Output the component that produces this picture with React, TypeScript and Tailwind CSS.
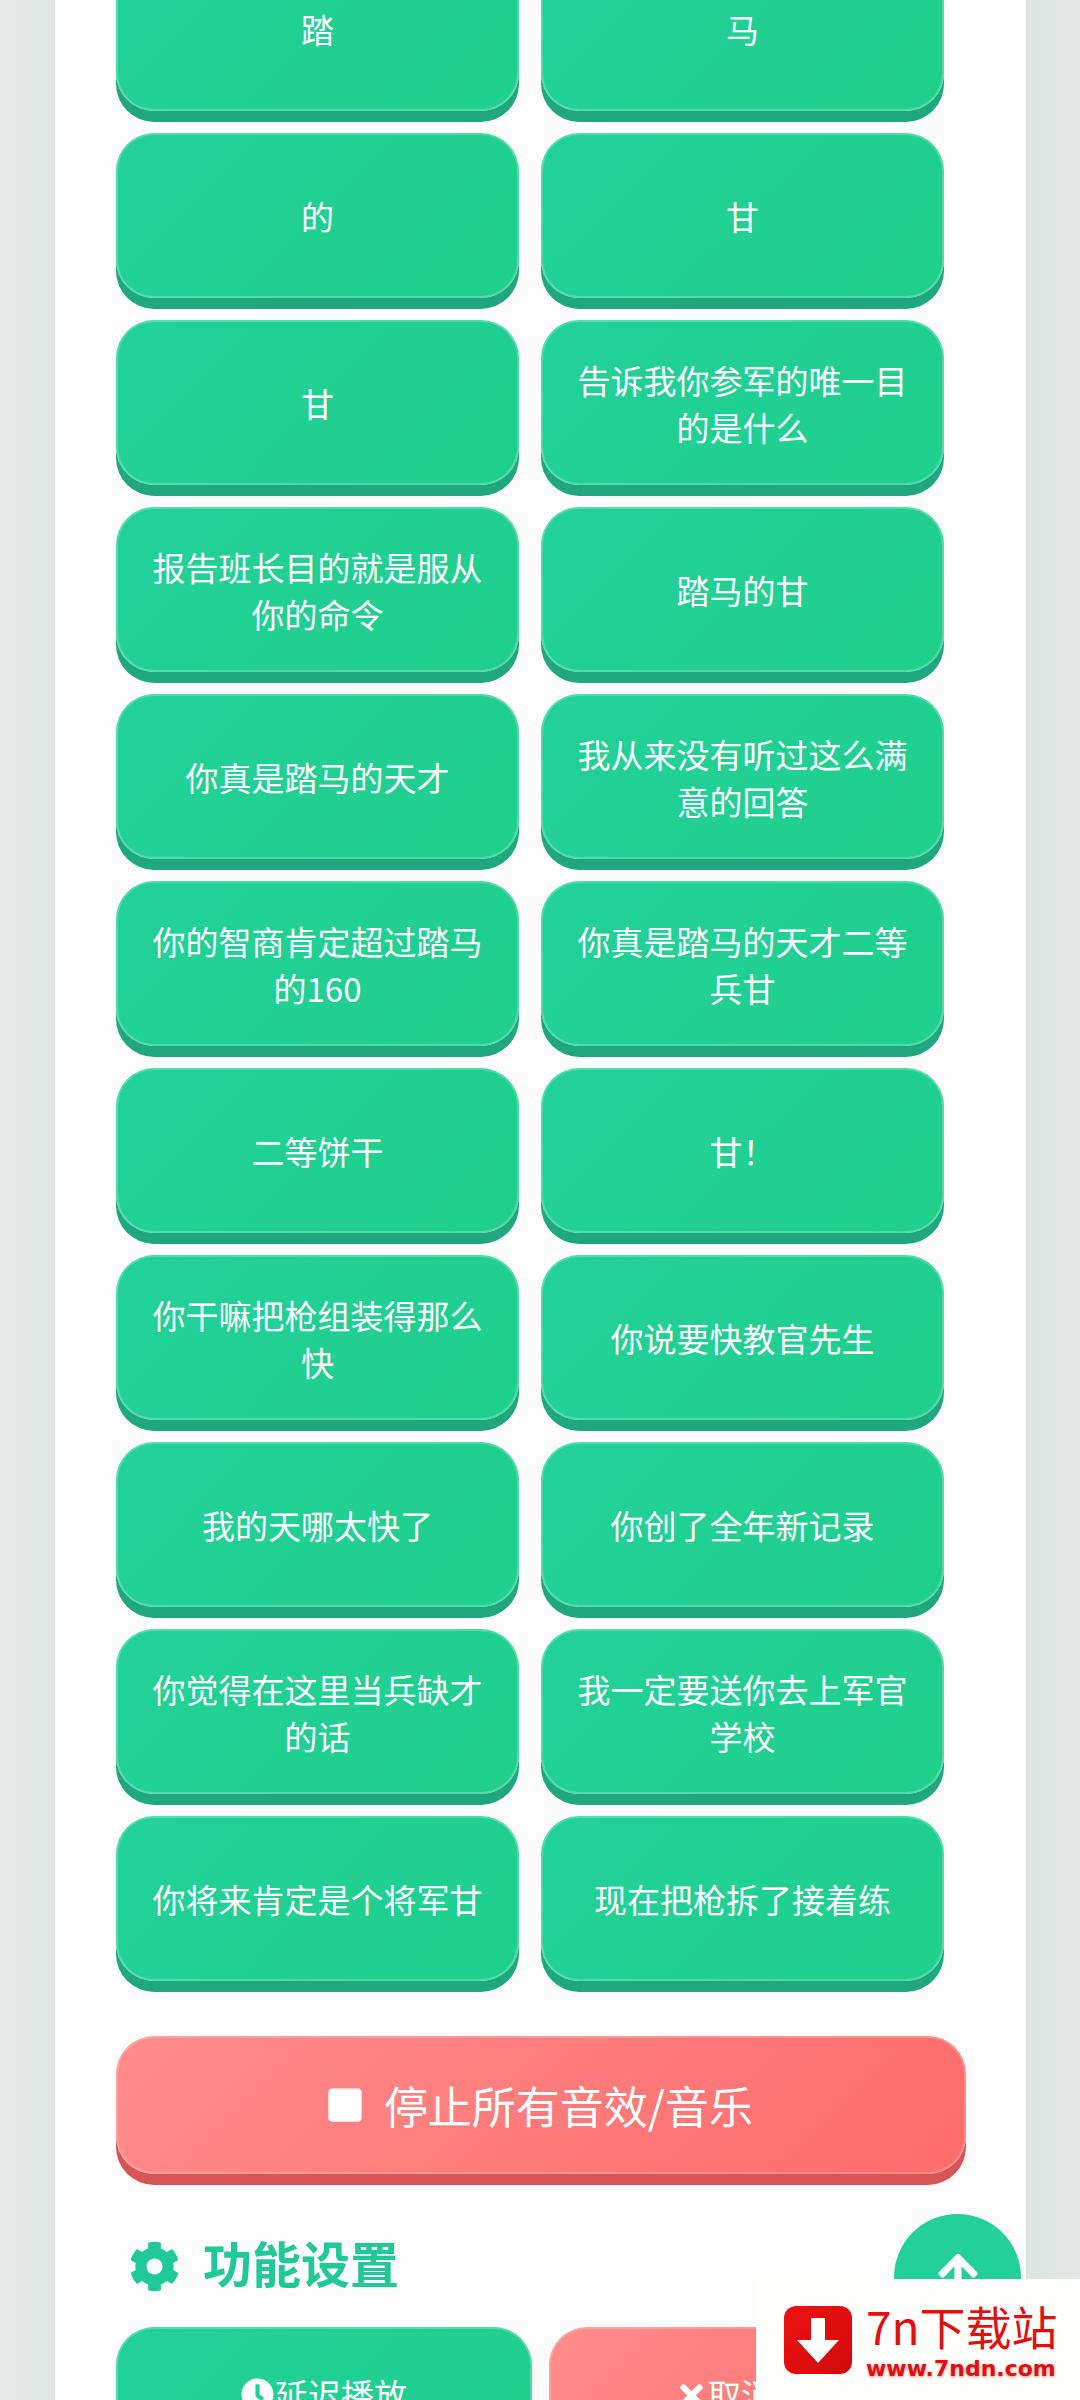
import { FaArrowUp, FaClock, FaCog, FaStop, FaTimes } from 'react-icons/fa'

const sounds = [
  '踏', '马',
  '的', '甘',
  '甘', '告诉我你参军的唯一目的是什么',
  '报告班长目的就是服从你的命令', '踏马的甘',
  '你真是踏马的天才', '我从来没有听过这么满意的回答',
  '你的智商肯定超过踏马的160', '你真是踏马的天才二等兵甘',
  '二等饼干', '甘！',
  '你干嘛把枪组装得那么快', '你说要快教官先生',
  '我的天哪太快了', '你创了全年新记录',
  '你觉得在这里当兵缺才的话', '我一定要送你去上军官学校',
  '你将来肯定是个将军甘', '现在把枪拆了接着练',
]

const green =
  'bg-[linear-gradient(135deg,#22d199,#1fcf8c)] shadow-[inset_0_0_0_2px_rgba(255,255,255,0.22),0_11px_0_#1fa87d]'
const red =
  'bg-[linear-gradient(135deg,#ff8c8c,#ff6b6b)] shadow-[inset_0_0_0_2px_rgba(255,255,255,0.2),0_11px_0_#d85555]'

export default function App() {
  return (
    <div className="relative flex h-[2400px] w-[1080px] overflow-hidden bg-[linear-gradient(90deg,#e7e9e8_0%,#dde5e2_5%,#dde5e2_96%,#e2e6e4_100%)] font-['Noto_Sans_CJK_SC','Noto_Sans',sans-serif] text-white">
      <main className="ml-[55px] w-[971px] bg-[#fcfcfd] pl-[61px] pr-[60px]">
        <div className="-mt-[54px] grid grid-cols-[403px_403px] gap-x-[22px] gap-y-[22px]">
          {sounds.map((label, i) => (
            <button
              key={i}
              className={`flex h-[165px] items-center justify-center rounded-[38px] px-[30px] pt-[2px] text-center text-[33px] leading-[47px] ${green}`}
            >
              {label}
            </button>
          ))}
        </div>

        <button
          className={`mt-[55px] flex h-[138px] w-[850px] items-center justify-center gap-[20px] rounded-[38px] pr-[3px] text-[44px] leading-none ${red}`}
        >
          <FaStop size={38} />
          <span>停止所有音效/音乐</span>
        </button>

        <h2 className="mt-[68px] flex h-[49px] items-center gap-[23px] pl-[13px] text-[49px] font-bold leading-none text-[#20c997]">
          <FaCog size={51} className="shrink-0" />
          <span className="pb-[10px]">功能设置</span>
        </h2>

        <div className="mt-[36px] grid grid-cols-[416px_417px] gap-x-[17px]">
          <button className={`flex h-[164px] items-start justify-center rounded-[38px] pt-[44px] text-[33px] leading-[47px] ${green}`}>
            <FaClock size={33} className="mr-px mt-[7px]" />
            延迟播放
          </button>
          <button className={`flex h-[164px] items-start justify-center rounded-[38px] pt-[44px] text-[33px] leading-[47px] ${red}`}>
            <FaTimes size={33} className="mt-[8px]" />
            取消延迟
          </button>
        </div>
      </main>

      {/* back to top */}
      <button className="absolute left-[894px] top-[2214px] flex h-[127px] w-[127px] items-center justify-center rounded-full bg-[#22d098] pb-[8px]">
        <FaArrowUp size={46} />
      </button>

      {/* watermark */}
      <div className="absolute left-[756px] top-[2279px] flex h-[121px] w-[324px] items-center bg-[#fefefc] pl-[28px]">
        <div className="flex h-[68px] w-[68px] shrink-0 items-center justify-center rounded-[12px] bg-gradient-to-br from-[#ee1212] to-[#d10a0a]">
          <svg viewBox="0 0 68 68" className="h-[68px] w-[68px]">
            <path d="M27 12h14v22h14L34 57 13 34h14z" fill="#fff" />
          </svg>
        </div>
        <div className="ml-[14px] flex flex-col">
          <span className="text-[46px] leading-[56px] text-[#e30f0f]">7n下载站</span>
          <span className="mt-[2px] font-['DejaVu_Sans',sans-serif] text-[22px] font-bold leading-[27px] text-[#e30f0f] [text-shadow:0_1px_3px_rgba(180,0,0,0.45)]">
            www.7ndn.com
          </span>
        </div>
      </div>
    </div>
  )
}
